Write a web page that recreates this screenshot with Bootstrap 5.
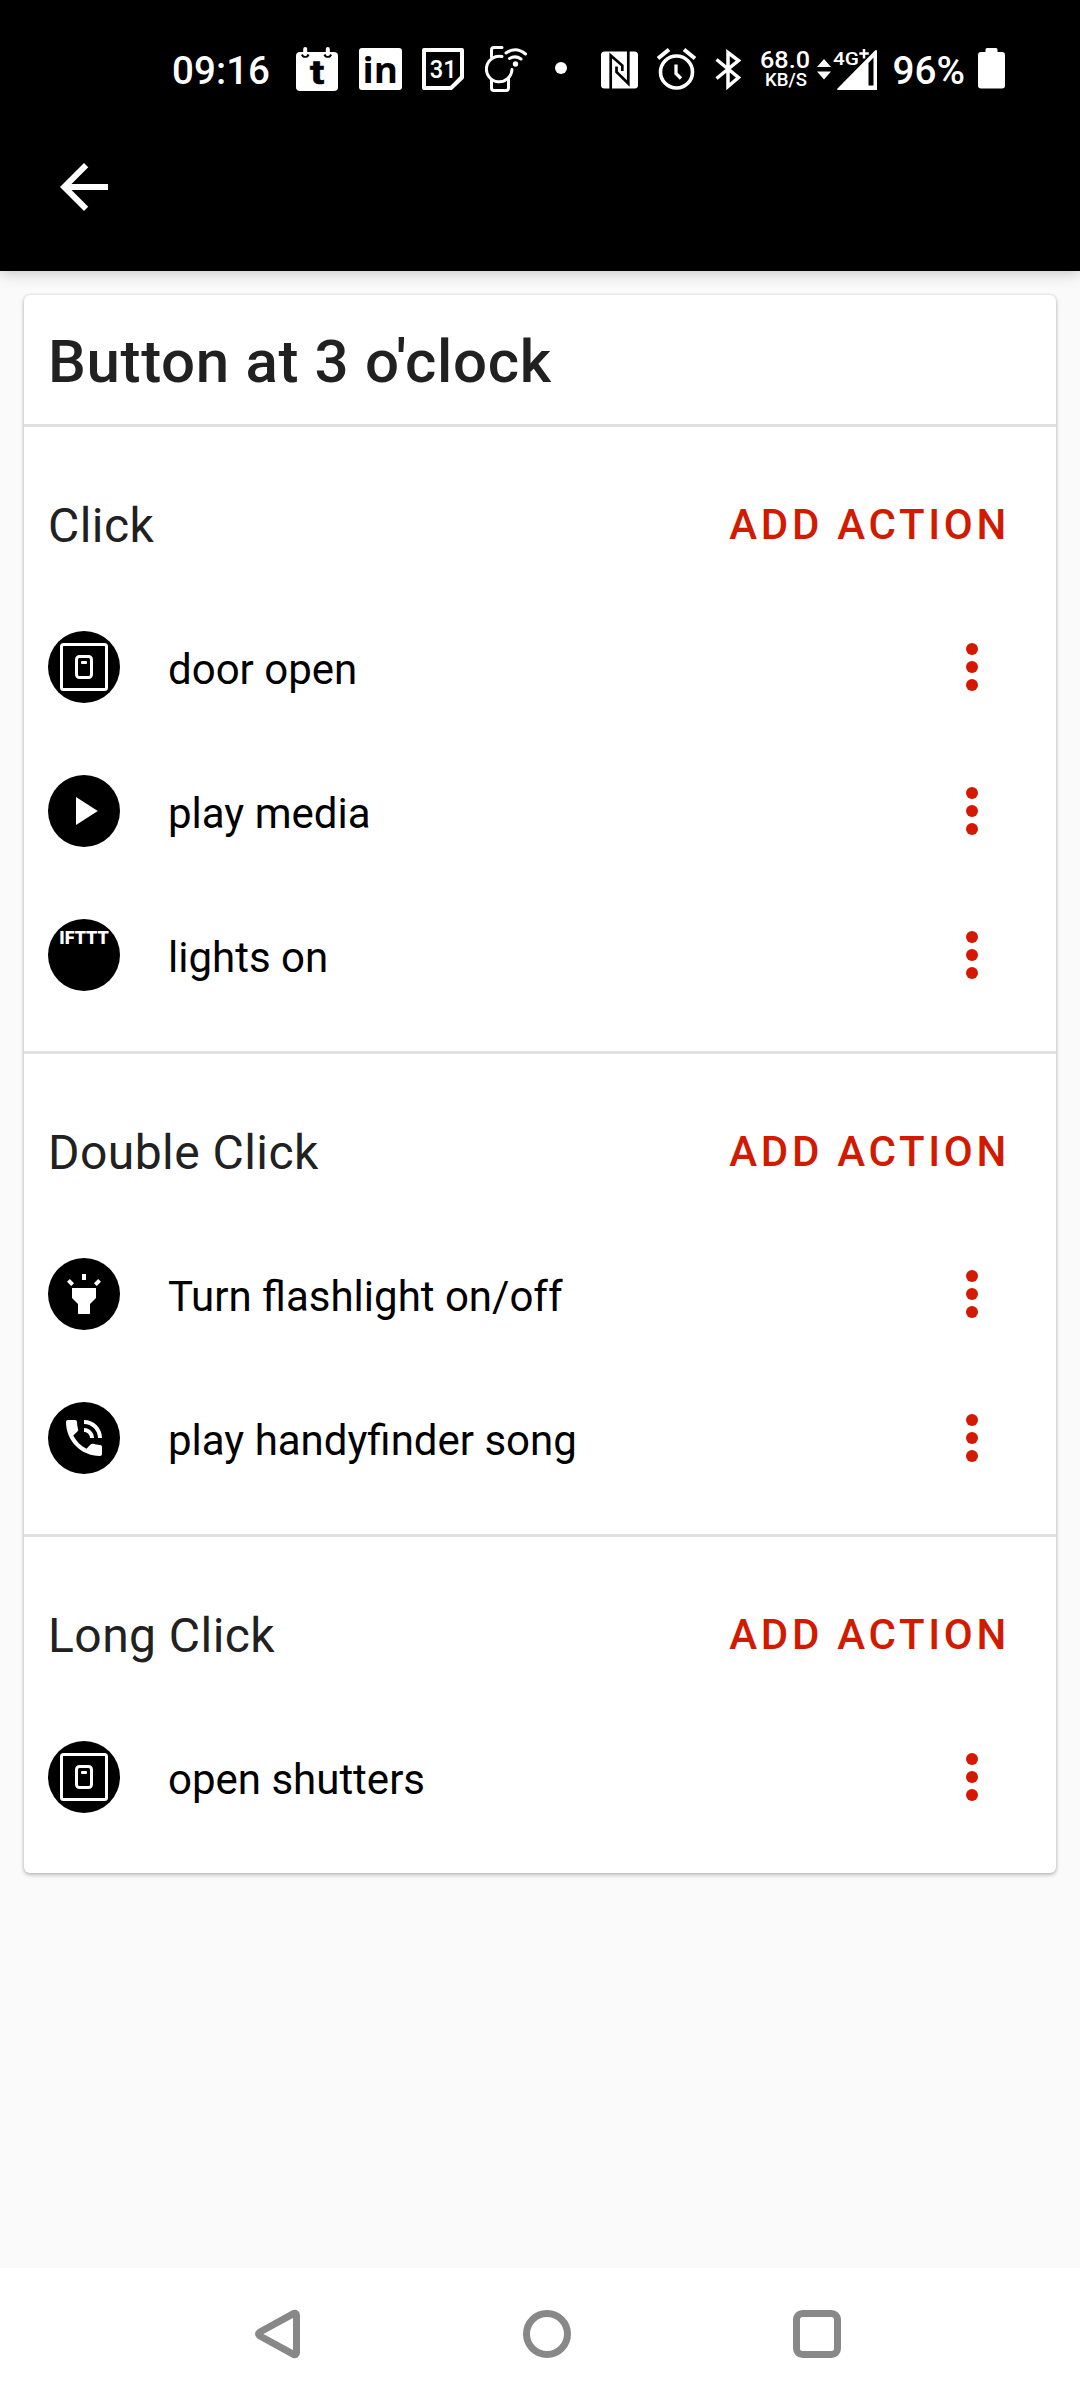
<!DOCTYPE html>
<html lang="en">
<head>
<meta charset="utf-8">
<meta name="viewport" content="width=device-width, initial-scale=1">
<title>Button at 3 o'clock</title>
<link href="https://cdn.jsdelivr.net/npm/bootstrap@5.3.0/dist/css/bootstrap.min.css" rel="stylesheet">
<style>
  body { background: #fafafa; font-family: Roboto, sans-serif; color: #000; }
  svg { display: block; flex: none; }
  .screen { height: 2400px; width: 1080px; }
  .top-area { background: #000; height: 271px; box-shadow: 0 2px 14px rgba(0,0,0,.22); }
  .status-bar { height: 136px; padding-left: 171px; color: #fff; }
  .status-bar text { fill: #fff; font-family: Roboto, sans-serif; font-weight: 500; }
  .status-bar text.cut { fill: #000; }
  .toolbar { height: 102px; padding-left: 48px; }
  .back { color: #fff; }
  .action-card { margin: 24px 24px 0; border: 0; border-radius: 6px; background: #fff;
    box-shadow: 0 2px 4px rgba(0,0,0,.24), 0 0 3px rgba(0,0,0,.14); }
  .card-title-bar { height: 129px; padding: 0 24px; }
  .card-title-bar h1 { font-size: 60px; font-weight: 500; line-height: 72px; letter-spacing: .65px; color: #212121; margin: 5px 0 0; }
  .group { border-top: 3px solid #e0e0e0; padding: 24px 24px 24px; }
  .group-head { height: 144px; }
  .group-head h2 { font-size: 48px; font-weight: 400; line-height: 60px; letter-spacing: .45px; color: #212121; margin: 6px 0 0; }
  .add-action { font-size: 42px; font-weight: 500; line-height: 60px; letter-spacing: 3.7px; color: #d11a00; border: 0; padding: 0; margin: 3px 22px 0 0; }
  .action-row { height: 144px; padding: 0; border: 0; background: none; color: #000; }
  .action-row .label-text { font-size: 42px; line-height: 60px; margin: 6px 0 0 48px; }
  .more { margin-right: 54px; color: #d51900; }
  .nav-keys { height: 132px; background: #fff; padding-left: 255px; color: #888; }
</style>
</head>
<body>
<svg width="0" height="0" class="position-absolute">
  <symbol id="ic-switch" viewBox="0 0 72 72">
    <circle cx="36" cy="36" r="36"/>
    <g fill="none" stroke="#fff" stroke-width="3"><rect x="13.5" y="13.5" width="45" height="45" rx="2"/><rect x="28.5" y="25.5" width="15" height="21" rx="3"/></g>
    <rect x="33" y="30" width="6" height="3" rx="1" fill="#fff"/>
  </symbol>
  <symbol id="ic-more" viewBox="0 0 12 48"><g fill="currentColor"><circle cx="6" cy="6" r="6"/><circle cx="6" cy="24" r="6"/><circle cx="6" cy="42" r="6"/></g></symbol>
</svg>
<div class="screen d-flex flex-column">
  <header class="top-area">
    <div class="status-bar d-flex">
      <svg width="125" height="136" viewBox="171 0 125 136"><text x="172" y="84" font-size="38.5" textLength="98">09:16</text></svg>
      <svg width="63" height="136" viewBox="296 0 63 136">
        <rect x="296" y="52" width="42" height="39" rx="4" fill="#fff"/>
        <path d="M302 54.500a3.500 3.500 0 0 0 6.500 0M324.500 54.500a3.500 3.500 0 0 0 6.500 0" fill="none" stroke="#000" stroke-width="2.200"/>
        <path d="M305.200 49v5M327.800 49v5" stroke="#fff" stroke-width="4" stroke-linecap="round"/>
        <text class="cut" x="310" y="83.500" font-size="34" style="font-weight:700" textLength="14.500" lengthAdjust="spacingAndGlyphs" stroke="#000" stroke-width=".6">t</text>
      </svg>
      <svg width="63" height="136" viewBox="359 0 63 136">
        <rect x="359" y="48" width="43" height="42" rx="3" fill="#fff"/>
        <text class="cut" x="362.500" y="83.300" font-size="36" style="font-family:'Open Sans',sans-serif;font-weight:700" textLength="35.500" lengthAdjust="spacingAndGlyphs">in</text>
      </svg>
      <svg width="63" height="136" viewBox="422 0 63 136">
        <path d="M424 50h38v27.500l-11 10.500h-27z" fill="none" stroke="#fff" stroke-width="4" stroke-linejoin="round"/>
        <path d="M463 75.500v3l-11 10.500h-2v-2l10.500-11.500z" fill="#fff"/>
        <text x="429.700" y="77.800" font-size="26.500" textLength="27" lengthAdjust="spacingAndGlyphs">31</text>
      </svg>
      <svg width="70" height="136" viewBox="485 0 70 136">
        <g fill="none" stroke="#fff" stroke-width="3" stroke-linecap="round" stroke-linejoin="round">
          <path d="M491.500 57v-7q0-2.500 2.500-2.500h8"/>
          <path d="M502 56.500a12.800 12.800 0 1 0 10 13"/>
          <path d="M491.500 80v8q0 2.500 2.500 2.500h12q2.500 0 2.500-2.500v-9"/>
          <path d="M506 53q10-7 19.500 1M509.500 58.500q6-3.500 11.500.5"/>
        </g>
        <circle cx="515.500" cy="64" r="2.700" fill="#fff"/>
      </svg>
      <svg width="46" height="136" viewBox="555 0 46 136"><circle cx="561" cy="68" r="6" fill="#fff"/></svg>
      <svg width="56" height="136" viewBox="601 0 56 136">
        <rect x="601" y="51.500" width="37" height="37" rx="3.500" fill="#fff"/>
        <path d="M610.700 89V55.500L622.300 65.500V71M628.300 51V83.500L616.500 72V66.500" fill="none" stroke="#000" stroke-width="2.700"/>
      </svg>
      <svg width="58" height="136" viewBox="657 0 58 136">
        <g fill="none" stroke="#fff"><circle cx="676.500" cy="72" r="16" stroke-width="3.600"/><path d="M658 58.500l11-9M695 58.500l-11-9" stroke-width="4"/><path d="M676 64.500v9l5 5" stroke-width="3.300"/></g>
      </svg>
      <svg width="44" height="136" viewBox="715 0 44 136">
        <path d="M716.500 59.500l22 18-10.500 9v-34l10.500 8-22 18" fill="none" stroke="#fff" stroke-width="3.500"/>
      </svg>
      <svg width="57" height="136" viewBox="759 0 57 136">
        <text x="760" y="68.300" font-size="24.500" textLength="50" lengthAdjust="spacingAndGlyphs">68.0</text>
        <text x="765" y="86" font-size="18" textLength="42" lengthAdjust="spacingAndGlyphs">KB/S</text>
      </svg>
      <svg width="77" height="136" viewBox="816 0 77 136">
        <path d="M817 67l7-8 7 8zM817 71.500l7 8 7-8z" fill="#fff"/>
        <text x="833" y="64.800" font-size="18.500" textLength="26" lengthAdjust="spacingAndGlyphs">4G</text>
        <path d="M864 49v9.500M859.300 53.500h9.500" stroke="#fff" stroke-width="2.500"/>
        <path d="M875.500 50q1.500-.5 1.500 1.500v38.500h-38.500q-2 0-1-1.500zM868.500 63v22.500h5v-28z" fill="#fff" fill-rule="evenodd"/>
      </svg>
      <svg width="85" height="136" viewBox="893 0 85 136"><text x="892.500" y="84" font-size="38.500" textLength="72.500" lengthAdjust="spacingAndGlyphs">96%</text></svg>
      <svg width="28" height="136" viewBox="978 0 28 136"><path d="M987 48h9q1.500 0 1.500 1.500v2.500h4.500q3 0 3 3v30.500q0 3-3 3h-21q-3 0-3-3v-30.500q0-3 3-3h4.500v-2.500q0-1.500 1.500-1.500z" fill="#fff"/></svg>
    </div>
    <div class="toolbar d-flex align-items-center">
      <a class="back" href="#" aria-label="Back"><svg width="72" height="72" viewBox="0 0 24 24" fill="currentColor"><path d="M20 11H7.830l5.590-5.590L12 4l-8 8 8 8 1.410-1.410L7.830 13H20z"/></svg></a>
    </div>
  </header>

  <main class="flex-grow-1">
    <div class="card action-card">
      <div class="card-title-bar d-flex align-items-center"><h1>Button at 3 o'clock</h1></div>

      <section class="group">
        <div class="group-head d-flex align-items-center justify-content-between"><h2>Click</h2><button class="btn add-action">ADD ACTION</button></div>
        <div class="list-group list-group-flush">
          <div class="list-group-item action-row d-flex align-items-center"><svg width="72" height="72"><use href="#ic-switch"/></svg><span class="label-text flex-grow-1">door open</span><svg class="more" width="12" height="48"><use href="#ic-more"/></svg></div>
          <div class="list-group-item action-row d-flex align-items-center"><svg width="72" height="72"><circle cx="36" cy="36" r="36"/><path d="M28 22v28l21.800-14z" fill="#fff"/></svg><span class="label-text flex-grow-1">play media</span><svg class="more" width="12" height="48"><use href="#ic-more"/></svg></div>
          <div class="list-group-item action-row d-flex align-items-center"><svg width="72" height="72"><circle cx="36" cy="36" r="36"/><text x="11.300" y="24.700" font-size="17.800" fill="#fff" style="font-family:Roboto,sans-serif;font-weight:900" textLength="49.500" lengthAdjust="spacingAndGlyphs">IFTTT</text></svg><span class="label-text flex-grow-1">lights on</span><svg class="more" width="12" height="48"><use href="#ic-more"/></svg></div>
        </div>
      </section>

      <section class="group">
        <div class="group-head d-flex align-items-center justify-content-between"><h2>Double Click</h2><button class="btn add-action">ADD ACTION</button></div>
        <div class="list-group list-group-flush">
          <div class="list-group-item action-row d-flex align-items-center"><svg width="72" height="72" viewBox="-6 -6 36 36"><circle cx="12" cy="12" r="18"/><path fill="#fff" d="M6 14l3 3v5h6v-5l3-3V9H6zm5-12h2v3h-2zM3.500 5.875L4.914 4.460l2.120 2.122L5.620 7.997zm13.460.710l2.123-2.120 1.414 1.414L18.375 8z"/></svg><span class="label-text flex-grow-1">Turn flashlight on/off</span><svg class="more" width="12" height="48"><use href="#ic-more"/></svg></div>
          <div class="list-group-item action-row d-flex align-items-center"><svg width="72" height="72" viewBox="-6 -6 36 36"><circle cx="12" cy="12" r="18"/><path fill="#fff" d="M20 15.500c-1.250 0-2.450-.2-3.570-.57-.35-.11-.74-.03-1.020.24l-2.200 2.200c-2.830-1.440-5.150-3.750-6.590-6.590l2.200-2.210c.28-.26.36-.65.25-1C8.700 6.450 8.500 5.250 8.500 4c0-.55-.45-1-1-1H4c-.55 0-1 .45-1 1 0 9.390 7.610 17 17 17 .55 0 1-.45 1-1v-3.500c0-.55-.45-1-1-1zM19 12h2c0-4.970-4.030-9-9-9v2c3.870 0 7 3.130 7 7zm-4 0h2c0-2.760-2.240-5-5-5v2c1.660 0 3 1.340 3 3z"/></svg><span class="label-text flex-grow-1">play handyfinder song</span><svg class="more" width="12" height="48"><use href="#ic-more"/></svg></div>
        </div>
      </section>

      <section class="group">
        <div class="group-head d-flex align-items-center justify-content-between"><h2>Long Click</h2><button class="btn add-action">ADD ACTION</button></div>
        <div class="list-group list-group-flush">
          <div class="list-group-item action-row d-flex align-items-center"><svg width="72" height="72"><use href="#ic-switch"/></svg><span class="label-text flex-grow-1">open shutters</span><svg class="more" width="12" height="48"><use href="#ic-more"/></svg></div>
        </div>
      </section>
    </div>
  </main>

  <nav class="nav-keys d-flex align-items-center">
    <svg width="268" height="50" viewBox="0 0 268 50" fill="none" stroke="currentColor" stroke-width="7" stroke-linejoin="round"><path d="M4.500 23.300L38.500 4.600Q41.500 3.500 41.500 6.500V43.500Q41.500 46.500 38.500 45.400L4.500 26.700Q2.500 25 4.500 23.300z"/></svg>
    <svg width="270" height="50" viewBox="0 0 270 50" fill="none" stroke="currentColor" stroke-width="7"><circle cx="24" cy="25" r="20.500"/></svg>
    <svg width="50" height="50" viewBox="0 0 50 50" fill="none" stroke="currentColor" stroke-width="7"><rect x="3.500" y="4.500" width="41" height="41" rx="6"/></svg>
  </nav>
</div>
<script src="https://cdn.jsdelivr.net/npm/bootstrap@5.3.0/dist/js/bootstrap.bundle.min.js"></script>
</body>
</html>
